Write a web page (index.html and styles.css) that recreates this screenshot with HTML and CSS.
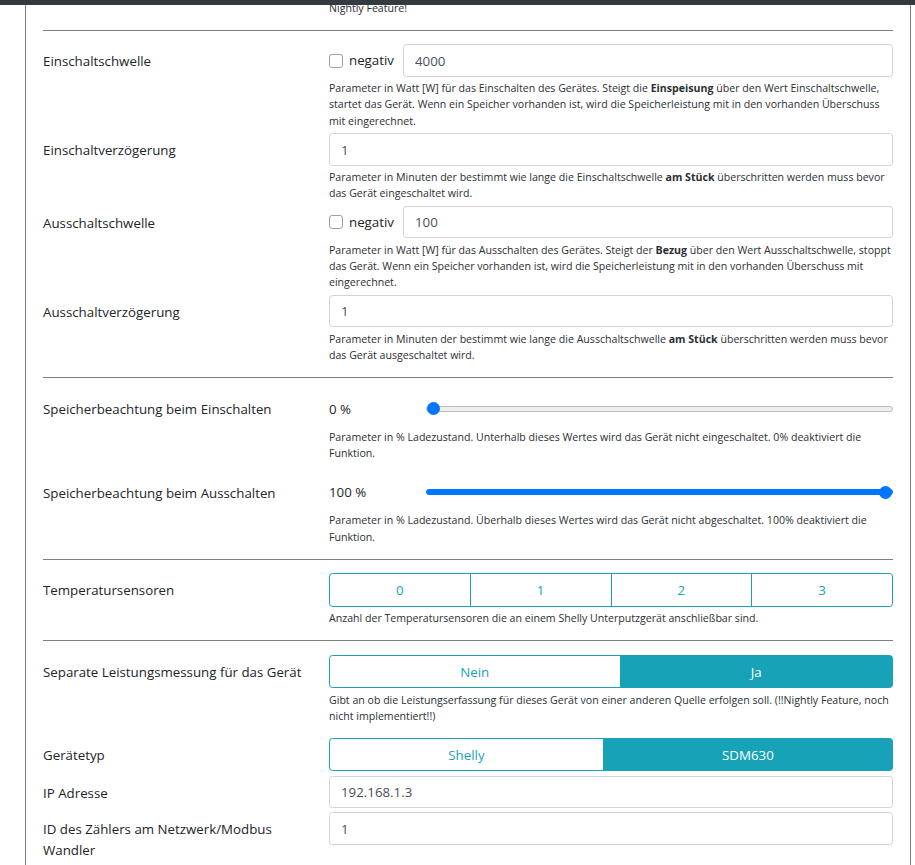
FILE: index.html
```html
<!DOCTYPE html>
<html lang="de">
<head>
<meta charset="utf-8">
<title>Gerät bearbeiten</title>
<link rel="stylesheet" href="styles.css">
</head>
<body>
<div class="topbar"></div>
<main class="card">
  <div class="row row-tight">
    <div class="lbl"></div>
    <div class="ctrl"><p class="help help-top">Nightly Feature!</p></div>
  </div>
  <hr class="sep">

  <div class="row row-tight">
    <label class="lbl" for="einS">Einschaltschwelle</label>
    <div class="ctrl">
      <div class="neg-group">
        <input type="checkbox" class="check" id="einNeg">
        <label class="neg-label" for="einNeg">negativ</label>
        <input type="text" class="form-control" id="einS" value="4000">
      </div>
      <p class="help">Parameter in Watt [W] für das Einschalten des Gerätes. Steigt die <b>Einspeisung</b> über den Wert Einschaltschwelle, startet das Gerät. Wenn ein Speicher vorhanden ist, wird die Speicherleistung mit in den vorhanden Überschuss mit eingerechnet.</p>
    </div>
  </div>

  <div class="row row-tight">
    <label class="lbl" for="einV">Einschaltverzögerung</label>
    <div class="ctrl">
      <input type="text" class="form-control" id="einV" value="1">
      <p class="help">Parameter in Minuten der bestimmt wie lange die Einschaltschwelle <b>am Stück</b> überschritten werden muss bevor das Gerät eingeschaltet wird.</p>
    </div>
  </div>

  <div class="row row-tight">
    <label class="lbl" for="ausS">Ausschaltschwelle</label>
    <div class="ctrl">
      <div class="neg-group">
        <input type="checkbox" class="check" id="ausNeg">
        <label class="neg-label" for="ausNeg">negativ</label>
        <input type="text" class="form-control" id="ausS" value="100">
      </div>
      <p class="help">Parameter in Watt [W] für das Ausschalten des Gerätes. Steigt der <b>Bezug</b> über den Wert Ausschaltschwelle, stoppt das Gerät. Wenn ein Speicher vorhanden ist, wird die Speicherleistung mit in den vorhanden Überschuss mit eingerechnet.</p>
    </div>
  </div>

  <div class="row">
    <label class="lbl" for="ausV">Ausschaltverzögerung</label>
    <div class="ctrl">
      <input type="text" class="form-control" id="ausV" value="1">
      <p class="help">Parameter in Minuten der bestimmt wie lange die Ausschaltschwelle <b>am Stück</b> überschritten werden muss bevor das Gerät ausgeschaltet wird.</p>
    </div>
  </div>
  <hr class="sep">

  <div class="row row-slider">
    <label class="lbl lbl-slider" for="spEin">Speicherbeachtung beim Einschalten</label>
    <div class="ctrl">
      <div class="range-wrap">
        <span class="range-value">0 %</span>
        <input type="range" class="range" id="spEin" min="0" max="100" value="0">
      </div>
      <p class="help help-slider">Parameter in % Ladezustand. Unterhalb dieses Wertes wird das Gerät nicht eingeschaltet. 0% deaktiviert die Funktion.</p>
    </div>
  </div>

  <div class="row">
    <label class="lbl lbl-slider" for="spAus">Speicherbeachtung beim Ausschalten</label>
    <div class="ctrl">
      <div class="range-wrap">
        <span class="range-value">100 %</span>
        <input type="range" class="range range-full" id="spAus" min="0" max="100" value="100">
      </div>
      <p class="help help-slider">Parameter in % Ladezustand. Überhalb dieses Wertes wird das Gerät nicht abgeschaltet. 100% deaktiviert die Funktion.</p>
    </div>
  </div>
  <hr class="sep">

  <div class="row">
    <div class="lbl">Temperatursensoren</div>
    <div class="ctrl">
      <div class="btn-group btn-group-equal">
        <button type="button" class="btn">0</button>
        <button type="button" class="btn">1</button>
        <button type="button" class="btn">2</button>
        <button type="button" class="btn">3</button>
      </div>
      <p class="help">Anzahl der Temperatursensoren die an einem Shelly Unterputzgerät anschließbar sind.</p>
    </div>
  </div>
  <hr class="sep">

  <div class="row row-loose">
    <div class="lbl">Separate Leistungsmessung für das Gerät</div>
    <div class="ctrl">
      <div class="btn-group">
        <button type="button" class="btn">Nein</button>
        <button type="button" class="btn active">Ja</button>
      </div>
      <p class="help">Gibt an ob die Leistungserfassung für dieses Gerät von einer anderen Quelle erfolgen soll. (!!Nightly Feature, noch nicht implementiert!!)</p>
    </div>
  </div>

  <div class="row row-tight">
    <div class="lbl">Gerätetyp</div>
    <div class="ctrl">
      <div class="btn-group">
        <button type="button" class="btn">Shelly</button>
        <button type="button" class="btn active">SDM630</button>
      </div>
    </div>
  </div>

  <div class="row row-tight">
    <label class="lbl" for="ip">IP Adresse</label>
    <div class="ctrl">
      <input type="text" class="form-control" id="ip" value="192.168.1.3">
    </div>
  </div>

  <div class="row row-tight">
    <label class="lbl" for="mid">ID des Zählers am Netzwerk/Modbus Wandler</label>
    <div class="ctrl">
      <input type="text" class="form-control" id="mid" value="1">
    </div>
  </div>
</main>
</body>
</html>
```

FILE: styles.css
```css
html, body {
  margin: 0;
  padding: 0;
  background: #ffffff;
}

body {
  font-family: "Open Sans", "Noto Sans", sans-serif;
  font-size: 13.3px;
  line-height: 20.4px;
  color: #212529;
}

.topbar {
  position: fixed;
  top: 0;
  left: 0;
  right: 0;
  height: 5px;
  background: #343a40;
  z-index: 10;
}

.card {
  display: block;
  box-sizing: border-box;
  width: 886px;
  margin-left: 25px;
  padding: 0 17px 40px;
  border-left: 1px solid #7b7f84;
  border-right: 1px solid #7b7f84;
  min-height: 900px;
}

.sep {
  border: 0;
  border-top: 1px solid #7b7f84;
  margin: 13.6px 0;
  height: 0;
}

.row {
  display: grid;
  grid-template-columns: 286px 1fr;
}

.row-tight {
  margin-bottom: 4.3px;
}

.row-slider {
  margin-bottom: 13.6px;
}

.row-loose {
  margin-bottom: 13.6px;
}

.lbl {
  padding-top: 7px;
  padding-right: 20px;
  line-height: 20.4px;
}

.lbl-slider {
  padding-top: 8px;
}

.ctrl {
  min-width: 0;
}

.help {
  margin: 3.4px 0 0;
  font-size: 10.6px;
  line-height: 16.3px;
  color: #2b2f33;
}

.help b {
  font-weight: 700;
}

.help-top {
  margin-top: 0;
}

.help-slider {
  margin-top: 2.5px;
}

.form-control {
  display: block;
  box-sizing: border-box;
  width: 100%;
  height: 32.3px;
  margin: 0;
  padding: 0 11px;
  border: 1px solid #ced4da;
  border-radius: 3.4px;
  background: #ffffff;
  font-family: inherit;
  font-size: 13.3px;
  color: #495057;
}

.neg-group {
  display: flex;
  align-items: center;
}

.check {
  -webkit-appearance: none;
  appearance: none;
  flex: none;
  width: 14px;
  height: 14px;
  margin: 0 6px 0 0;
  border: 1px solid #9aa0a6;
  border-radius: 3px;
  background: #ffffff;
}

.neg-label {
  margin-right: 9px;
}

.neg-group .form-control {
  flex: 1 1 auto;
  width: auto;
  min-width: 0;
}

.range-wrap {
  display: flex;
  align-items: center;
  height: 35px;
}

.range-value {
  flex: none;
  width: 97px;
}

.range {
  -webkit-appearance: none;
  appearance: none;
  flex: 1 1 auto;
  min-width: 0;
  height: 16px;
  margin: 0;
  padding: 0;
  background: transparent;
}

.range::-webkit-slider-runnable-track {
  height: 6px;
  box-sizing: border-box;
  border-radius: 3px;
  border: 1px solid #bdbdbd;
  background: #efefef;
}

.range::-webkit-slider-thumb {
  -webkit-appearance: none;
  appearance: none;
  width: 13px;
  height: 13px;
  margin-top: -4.5px;
  border: 0;
  border-radius: 50%;
  background: #0075ff;
}

.range-full::-webkit-slider-runnable-track {
  border-color: #0075ff;
  background: #0075ff;
}

.btn-group {
  display: flex;
}

.btn {
  flex: 1 1 auto;
  box-sizing: border-box;
  height: 33.6px;
  margin: 0;
  padding: 0 10px;
  border: 1px solid #17a2b8;
  border-radius: 0;
  background: #ffffff;
  font-family: inherit;
  font-size: 13.3px;
  color: #17a2b8;
}

.btn-group-equal .btn {
  flex: 1 1 0;
}

.btn + .btn {
  margin-left: -1px;
}

.btn:first-child {
  border-radius: 3.4px 0 0 3.4px;
}

.btn:last-child {
  border-radius: 0 3.4px 3.4px 0;
}

.btn.active {
  background: #17a2b8;
  color: #ffffff;
}
```
